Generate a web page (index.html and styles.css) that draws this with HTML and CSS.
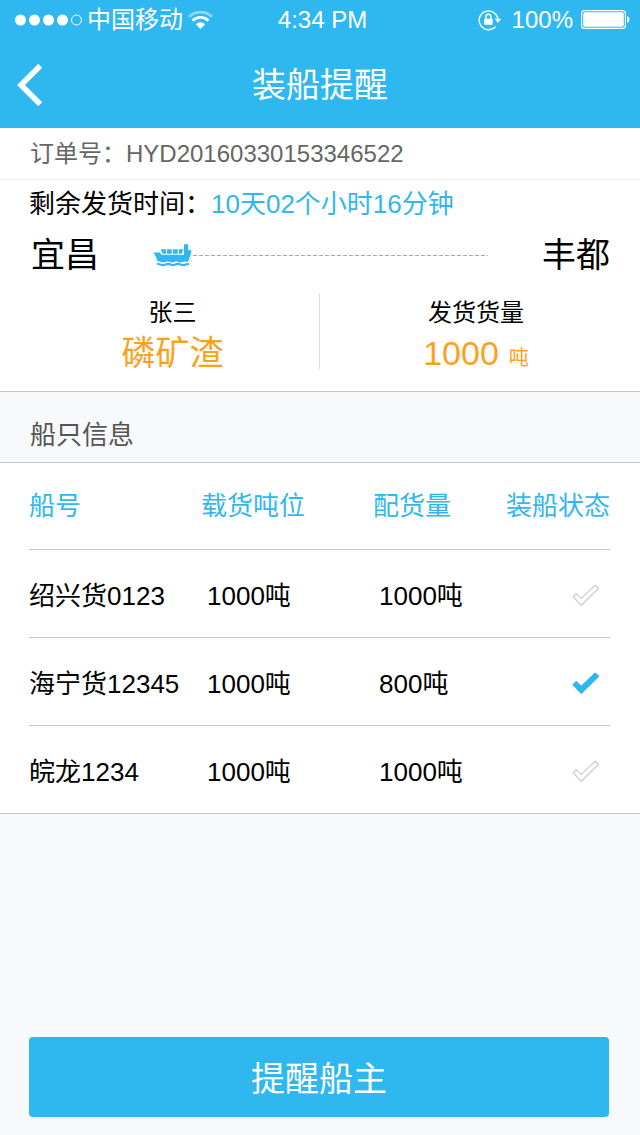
FILE: index.html
```html
<!DOCTYPE html>
<html lang="zh-CN">
<head>
<meta charset="utf-8">
<meta name="viewport" content="width=device-width, initial-scale=1">
<title>装船提醒</title>
<link rel="stylesheet" href="styles.css">
</head>
<body>
<header class="header">
  <div class="status">
    <div class="status-left">
      <svg class="signal" width="67" height="12" viewBox="0 0 67 12" aria-hidden="true">
        <g fill="#fff"><circle cx="5.5" cy="6" r="5.5"/><circle cx="19.5" cy="6" r="5.5"/><circle cx="33.5" cy="6" r="5.5"/><circle cx="47.5" cy="6" r="5.5"/></g>
        <circle cx="61.5" cy="6" r="5" fill="none" stroke="#fff"/>
      </svg>
      <span class="carrier">中国移动</span>
      <svg width="25" height="18" viewBox="0 0 25 18" fill="none" aria-hidden="true">
        <path d="M1 5.8A16.4 16.4 0 0 1 24 5.8" stroke="#fff" stroke-opacity=".45" stroke-width="2.6"/>
        <path d="M4.600 9.800A11 11 0 0 1 20.400 9.800" stroke="#fff" stroke-width="2.800"/>
        <path d="M7.900 13.300A6.200 6.200 0 0 1 17.100 13.300L12.500 18Z" fill="#fff"/>
      </svg>
    </div>
    <span class="clock">4:34 PM</span>
    <div class="status-right">
      <svg width="24" height="22" viewBox="0 0 24 22" fill="none" aria-hidden="true">
        <path d="M17.6 17.6A9.4 9.4 0 1 1 19.9 10.2" stroke="#fff" stroke-width="1.4"/>
        <path d="M16.6 9.8h6.6l-3.3 4.2z" fill="#fff"/>
        <rect x="6.2" y="9.8" width="8.4" height="6" rx=".6" fill="#fff"/>
        <path d="M7.9 10V7.7a2.5 2.5 0 0 1 5 0V10" stroke="#fff" stroke-width="1.4"/>
      </svg>
      <span class="percent">100%</span>
      <svg width="49" height="20" viewBox="0 0 49 20" aria-hidden="true">
        <rect x=".6" y=".6" width="43.8" height="17.8" rx="3" fill="none" stroke="#fff" stroke-width="1.1"/>
        <rect x="2.2" y="2.2" width="40.6" height="14.6" rx="1.8" fill="#fff"/>
        <path d="M46 6.2c3.4.8 3.4 6 0 6.8z" fill="#fff"/>
      </svg>
    </div>
  </div>
  <div class="navbar">
    <button class="back" type="button" aria-label="返回">
      <svg width="26" height="42" viewBox="0 0 26 42" fill="none"><path d="M23.2 1.8L4 21l19.2 19.2" stroke="#fff" stroke-width="5.6"/></svg>
    </button>
    <h1 class="title">装船提醒</h1>
  </div>
</header>

<main class="main">
  <section class="order">
    <p class="order-no">订单号：HYD20160330153346522</p>
    <p class="remaining">剩余发货时间：<span class="remaining-value">10天02个小时16分钟</span></p>
    <div class="route">
      <span>宜昌</span>
      <div class="track">
        <svg width="39" height="23" viewBox="0 0 39 23" aria-hidden="true">
          <g fill="#2fb8ef">
            <path d="M0 8.500H6.500L8.800 10.800H31V.3H35.200V6.300H38.500C38 11 36 15.500 34.800 18.200C33 17 31.500 17.300 30 18.100C28 19 26.500 18.300 24.700 17.800C22.500 17.200 21.200 18.300 19.500 18.500C17.500 18.600 16.500 17.500 14.500 17.600C12.500 17.700 11.500 18.700 9.500 18.500C7.700 18.200 6.500 17 4.700 17.400C3.200 14 2.800 11 0 8.500Z"/>
            <path d="M7.600 5.300h5.300v4.500H9.700zM14 5.300h4.800v4.500H14zM19.900 5.300h4.800v4.500h-4.800zM25.800 5.300h4.400l-1.400 4.500h-3z"/>
          </g>
          <path d="M4 20.200C6.500 19.200 7.800 21.400 10 21.200S13 19.700 15.200 19.900S18 21.200 20 21.200S23 19.700 25.200 19.900S28 21.200 30 21.200S33 19.500 36 20.300" fill="none" stroke="#2fb8ef" stroke-width="2.200"/>
        </svg>
        <span class="dashes"></span>
      </div>
      <span>丰都</span>
    </div>
    <div class="cargo">
      <dl class="cargo-item cargo-name">
        <dt>张三</dt>
        <dd>磷矿渣</dd>
      </dl>
      <dl class="cargo-item cargo-amount">
        <dt>发货货量</dt>
        <dd>1000<span class="unit">吨</span></dd>
      </dl>
    </div>
  </section>

  <h2 class="section-title">船只信息</h2>

  <section class="ships">
    <table class="table">
      <thead>
        <tr><th class="col" scope="col">船号</th><th class="col" scope="col">载货吨位</th><th class="col-narrow" scope="col">配货量</th><th class="state" scope="col">装船状态</th></tr>
      </thead>
      <tbody>
        <tr>
          <td>绍兴货0123</td><td class="num">1000吨</td><td class="num">1000吨</td>
          <td class="state"><label class="check"><input type="checkbox" aria-label="绍兴货0123 装船状态"><svg width="28" height="23" viewBox="0 0 28 23"><path d="M1.200 12.800L4.300 9.600L9.200 14.400L23.100 1.300L26.600 4.200L9.200 21.300Z"/></svg></label></td>
        </tr>
        <tr>
          <td>海宁货12345</td><td class="num">1000吨</td><td class="num">800吨</td>
          <td class="state"><label class="check"><input type="checkbox" checked aria-label="海宁货12345 装船状态"><svg width="28" height="23" viewBox="0 0 28 23"><path d="M1.200 12.800L4.300 9.600L9.200 14.400L23.100 1.300L26.600 4.200L9.200 21.300Z"/></svg></label></td>
        </tr>
        <tr>
          <td>皖龙1234</td><td class="num">1000吨</td><td class="num">1000吨</td>
          <td class="state"><label class="check"><input type="checkbox" aria-label="皖龙1234 装船状态"><svg width="28" height="23" viewBox="0 0 28 23"><path d="M1.200 12.800L4.300 9.600L9.200 14.400L23.100 1.300L26.600 4.200L9.200 21.300Z"/></svg></label></td>
        </tr>
      </tbody>
    </table>
  </section>
</main>

<footer class="footer">
  <button class="remind" type="button">提醒船主</button>
</footer>
</body>
</html>
```
FILE: styles.css
```css
* { box-sizing: border-box; }

body {
  margin: 0;
  min-height: 100vh;
  display: flex;
  flex-direction: column;
  background: #f7f9fb;
  color: #000;
  font-family: "Liberation Sans", "Noto Sans CJK SC", sans-serif;
  font-size: 26px;
  line-height: 36px;
}

h1, h2, p, dl, dd { margin: 0; font-weight: 400; }
button { border: 0; padding: 0; font: inherit; cursor: pointer; }
svg { display: block; flex: none; }

.header { background: #2fb8ef; color: #fff; }

.status {
  display: grid;
  grid-template-columns: 1fr auto 1fr;
  align-items: center;
  height: 40px;
  padding: 0 10px 0 15px;
  font-size: 24px;
}
.status-left, .status-right { display: flex; align-items: center; }
.status-left { gap: 5px; }
.status-right { gap: 8px; justify-content: flex-end; }
.percent { margin-left: 2px; }

.navbar {
  display: grid;
  grid-template-columns: 1fr auto 1fr;
  align-items: center;
  height: 88px;
  padding: 2px 17px 0;
}
.back { justify-self: start; background: none; }
.title { font-size: 34px; line-height: 48px; }

.order { background: #fff; border-bottom: 1px solid #c8c8c8; padding-bottom: 22px; }
.order-no {
  padding: 8px 30px 7px;
  border-bottom: 1px solid #ececec;
  color: #666;
  font-size: 24px;
}
.remaining { padding: 6px 29px 0; }
.remaining-value { color: #2fb8ef; }

.route {
  display: flex;
  align-items: center;
  gap: 54px;
  padding: 9px 30px 14px 31px;
  font-size: 34px;
  line-height: 48px;
}
.track { flex: 1; display: flex; align-items: center; gap: 1px; }
.dashes {
  flex: 1;
  height: 1px;
  background: repeating-linear-gradient(90deg, #a8a8a8 0 4px, transparent 4px 6px);
}

.cargo { display: grid; grid-template-columns: 1fr 1fr; text-align: center; }
.cargo-item { height: 76px; line-height: 40px; }
.cargo-name { padding-left: 26px; border-right: 1px solid #ddd; }
.cargo-amount { padding-right: 8px; }
.cargo-item dt { font-size: 24px; }
.cargo-item dd { color: #fca11e; font-size: 34px; }
.cargo-item .unit { margin-left: 10px; font-size: 20px; }

.section-title {
  padding: 25px 30px 9px;
  color: #555;
  font-size: 26px;
}

.ships {
  padding: 0 30px 0 29px;
  background: #fff;
  border: solid #c8c8c8;
  border-width: 1px 0;
}
.table { width: 100%; border-collapse: collapse; table-layout: fixed; }
.table tbody tr { border-top: 1px solid #c8c8c8; }
.table th, .table td { height: 88px; padding: 0; text-align: left; vertical-align: middle; white-space: nowrap; }
.table th { height: 86px; color: #2fb8ef; font-weight: 400; }
.table td { padding-top: 6px; }
.table .col { width: 172px; }
.table .num { padding-left: 6px; }
.table .state { text-align: right; }
.table td.state { padding: 0 10px 0 0; }

.check { display: inline-grid; vertical-align: middle; cursor: pointer; }
.check input, .check svg { grid-area: 1 / 1; }
.check input { appearance: none; margin: 0; width: 28px; height: 23px; }
.check svg {
  pointer-events: none;
  fill: #fff;
  stroke: #cfcfcf;
  stroke-width: 1.3px;
  stroke-linejoin: round;
}
.check input:checked + svg { fill: #2fb8ef; stroke: #2fb8ef; }

.footer { margin-top: auto; padding: 18px 31px 18px 29px; }
.remind {
  width: 100%;
  height: 80px;
  padding-top: 3px;
  border-radius: 4px;
  background: #2fb8ef;
  color: #fff;
  font-size: 34px;
}
```
